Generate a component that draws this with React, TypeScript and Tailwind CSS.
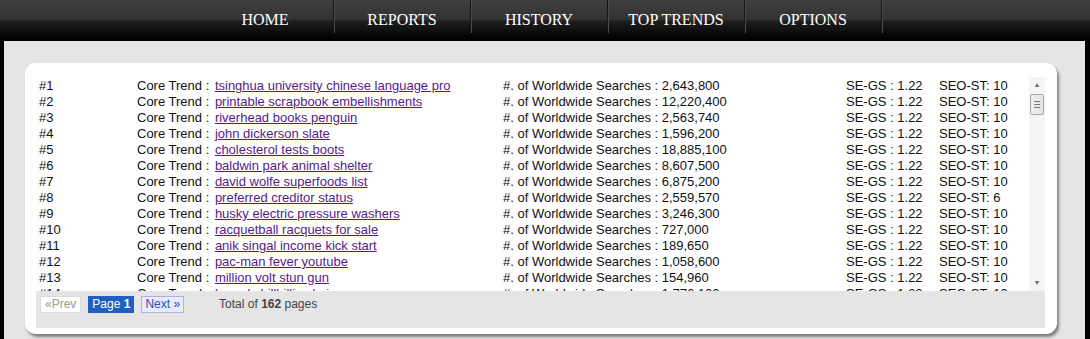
import React from "react";

const rows: [string, string, string][] = [
  ["tsinghua university chinese language pro", "2,643,800", "10"],
  ["printable scrapbook embellishments", "12,220,400", "10"],
  ["riverhead books penguin", "2,563,740", "10"],
  ["john dickerson slate", "1,596,200", "10"],
  ["cholesterol tests boots", "18,885,100", "10"],
  ["baldwin park animal shelter", "8,607,500", "10"],
  ["david wolfe superfoods list", "6,875,200", "10"],
  ["preferred creditor status", "2,559,570", "6"],
  ["husky electric pressure washers", "3,246,300", "10"],
  ["racquetball racquets for sale", "727,000", "10"],
  ["anik singal income kick start", "189,650", "10"],
  ["pac-man fever youtube", "1,058,600", "10"],
  ["million volt stun gun", "154,960", "10"],
  ["beverly hillbillies lyrics", "1,776,100", "10"],
];

const nav = ["HOME", "REPORTS", "HISTORY", "TOP TRENDS", "OPTIONS"];

export default function App() {
  return (
    <div className="w-[1090px] h-[339px] overflow-hidden bg-black flex flex-col">
      <div className="h-[41px] shrink-0 bg-[linear-gradient(to_bottom,#3f3f3f_0%,#323232_47%,#1e1e1e_52%,#080808_85%,#000_100%)] flex pl-[197px]">
        {nav.map((n) => (
          <div
            key={n}
            className="w-[137px] h-[33px] border-r border-r-[#151515] shadow-[1px_0_0_#4a4a4a] flex items-center justify-center pt-[6px] text-white text-[16px] font-['Liberation_Serif',serif]"
          >
            {n}
          </div>
        ))}
      </div>
      <div className="flex-1 mx-[4px] mr-[5px] bg-[#e5e5e5] pt-[22px] pl-[21px] pr-[28px]">
        <div className="bg-white rounded-[11px] shadow-[2px_3px_3px_rgba(0,0,0,0.45)] pt-[14px] pl-[11px] pr-[12px] pb-[6px] font-['Liberation_Sans',Arial,sans-serif] text-[13px] text-[#111]">
          <div className="flex h-[214px]">
            <div className="flex-1 overflow-hidden pt-[1px]">
              {rows.map(([t, s, st], i) => (
                <div
                  key={i}
                  className="grid grid-cols-[98px_366px_343px_93px_auto] h-[16px] leading-[16px] pl-[3px] whitespace-nowrap"
                >
                  <span>#{i + 1}</span>
                  <span>
                    Core Trend :{" "}
                    <a href="#" className="ml-[2px] text-[#551a8b] underline">
                      {t}
                    </a>
                  </span>
                  <span>#. of Worldwide Searches : {s}</span>
                  <span>SE-GS : 1.22</span>
                  <span>SEO-ST: {st}</span>
                </div>
              ))}
            </div>
            <div className="w-[16px] bg-[#f4f4f4] flex flex-col items-center">
              <div className="h-[16px] flex items-center justify-center text-[#666] text-[7px]">▲</div>
              <div className="w-[14px] h-[21px] mt-[1px] bg-[linear-gradient(to_right,#f0f0f0,#e2e2e2)] border border-[#a8a8a8] rounded-[2px] flex flex-col items-center justify-center gap-[2px]">
                <div className="w-[6px] h-px bg-[#777]" />
                <div className="w-[6px] h-px bg-[#777]" />
                <div className="w-[6px] h-px bg-[#777]" />
              </div>
              <div className="flex-1" />
              <div className="h-[16px] flex items-center justify-center text-[#666] text-[7px]">▼</div>
            </div>
          </div>
          <div className="bg-[#e5e5e5] h-[37px] flex items-start pt-[5px] pl-[4px] text-[12px]">
            <span className="h-[17px] px-[4px] border border-[#dadada] bg-white text-[#999] leading-[15px]">«Prev</span>
            <span className="h-[17px] ml-[7px] px-[4px] bg-[#1f5fbf] text-white leading-[17px]">
              Page <b>1</b>
            </span>
            <span className="h-[17px] ml-[7px] px-[3px] border border-[#a9b3e3] bg-[#e9ecf7] text-[#2d52b4] leading-[15px]">Next »</span>
            <span className="ml-[35px] text-[#444] leading-[17px]">
              Total of <b>162</b> pages
            </span>
          </div>
        </div>
      </div>
    </div>
  );
}
